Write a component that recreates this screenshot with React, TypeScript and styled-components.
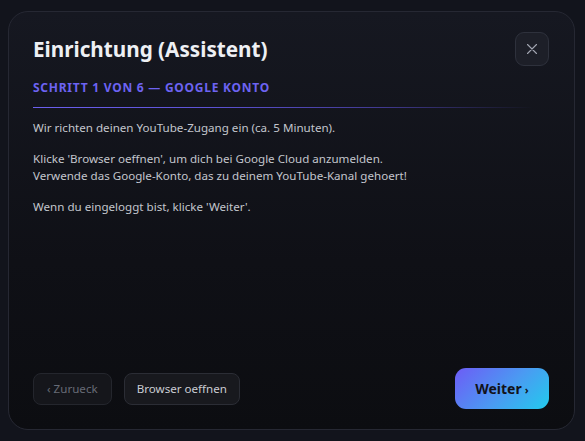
import React from 'react'
import styled, { createGlobalStyle } from 'styled-components'

const GlobalStyle = createGlobalStyle`
  html, body {
    margin: 0;
    padding: 0;
    background: #12141c;
    font-family: "Noto Sans", "Open Sans", sans-serif;
  }
`

const Page = styled.div`
  width: 585px;
  height: 441px;
  padding: 11px 10px 11px 8px;
  box-sizing: border-box;
`

const Dialog = styled.div`
  height: 100%;
  box-sizing: border-box;
  border: 1px solid #262833;
  border-radius: 20px;
  background: linear-gradient(180deg, #161821 0%, #0f1016 60%, #0c0d11 100%);
  padding: 20px 25px 20px 24px;
  display: flex;
  flex-direction: column;
`

const Header = styled.div`
  display: flex;
  justify-content: space-between;
  align-items: center;
`

const Title = styled.h1`
  margin: 0;
  font-size: 20.7px;
  font-weight: 700;
  line-height: 34px;
  color: #eef0f4;
`

const StepLabel = styled.div`
  margin-top: 13px;
  font-size: 12px;
  line-height: 17px;
  font-weight: 700;
  letter-spacing: 0.75px;
  color: #6d63f2;
`

const Divider = styled.div`
  margin-top: 11px;
  height: 1px;
  width: 500px;
  background: linear-gradient(90deg, #6c60f0 0%, #5d53d6 35%, #40398f 70%, rgba(40, 36, 90, 0) 100%);
`

const CloseButton = styled.button`
  flex-shrink: 0;
  width: 34px;
  height: 34px;
  border-radius: 9px;
  border: 1px solid #2e313c;
  background: #1d1f28;
  color: #a3a7b2;
  display: flex;
  align-items: center;
  justify-content: center;
  padding: 0;
  cursor: pointer;
`

const Body = styled.div`
  margin-top: 11px;
  flex: 1;
  font-size: 11.6px;
  line-height: 17px;
  color: #c3c6cd;
`

const Paragraph = styled.p`
  margin: 0 0 14px;
`

const Footer = styled.div`
  display: flex;
  align-items: center;
  gap: 12px;
`

const GhostButton = styled.button<{ $disabled?: boolean }>`
  height: 32px;
  padding: 0 ${(p) => (p.$disabled ? '13px' : '12px')};
  border-radius: 8px;
  border: 1px solid ${(p) => (p.$disabled ? '#24262d' : '#2b2d35')};
  background: ${(p) => (p.$disabled ? '#15161b' : '#18191e')};
  color: ${(p) => (p.$disabled ? '#676b76' : '#c9ccd3')};
  font-family: inherit;
  font-size: 11.6px;
`

const PrimaryButton = styled.button`
  margin-left: auto;
  height: 41px;
  width: 94px;
  border: none;
  border-radius: 11px;
  background: linear-gradient(135deg, #6d5cf6 0%, #4a9bf2 55%, #22cbed 100%);
  color: #12131a;
  font-family: inherit;
  font-size: 14px;
  font-weight: 700;
`

const Chevron = styled.span`
  font-size: 11px;
  margin-left: 3px;
`

function CloseIcon() {
  return (
    <svg width="10" height="10" viewBox="0 0 10 10" fill="none">
      <path d="M0.5 0.5L9.5 9.5M9.5 0.5L0.5 9.5" stroke="currentColor" strokeWidth="1.1" strokeLinecap="round" />
    </svg>
  )
}

export default function App() {
  return (
    <>
      <GlobalStyle />
      <Page>
        <Dialog>
          <Header>
            <Title>Einrichtung (Assistent)</Title>
            <CloseButton aria-label="Schliessen">
              <CloseIcon />
            </CloseButton>
          </Header>
          <StepLabel>SCHRITT 1 VON 6 — GOOGLE KONTO</StepLabel>
          <Divider />
          <Body>
            <Paragraph>Wir richten deinen YouTube-Zugang ein (ca. 5 Minuten).</Paragraph>
            <Paragraph>
              Klicke 'Browser oeffnen', um dich bei Google Cloud anzumelden.
              <br />
              Verwende das Google-Konto, das zu deinem YouTube-Kanal gehoert!
            </Paragraph>
            <Paragraph>Wenn du eingeloggt bist, klicke 'Weiter'.</Paragraph>
          </Body>
          <Footer>
            <GhostButton $disabled>‹ Zurueck</GhostButton>
            <GhostButton>Browser oeffnen</GhostButton>
            <PrimaryButton>
              Weiter<Chevron>›</Chevron>
            </PrimaryButton>
          </Footer>
        </Dialog>
      </Page>
    </>
  )
}
